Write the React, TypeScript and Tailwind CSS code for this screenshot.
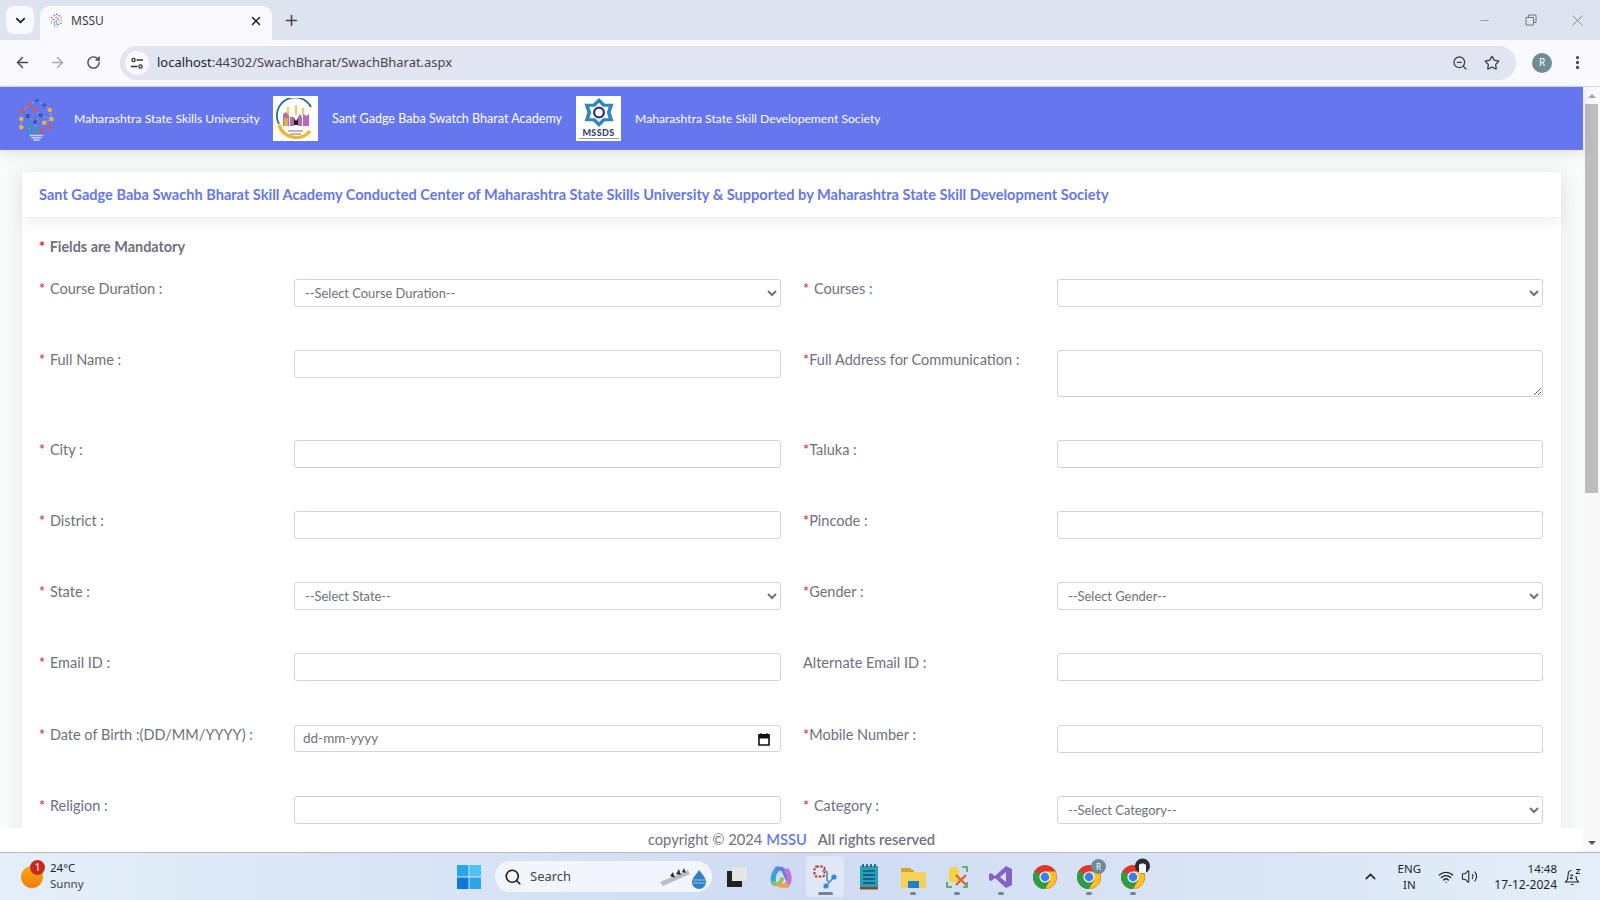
import { ArrowLeft, ArrowRight, ChevronDown, ChevronUp, Minus, MoreVertical, Plus, RotateCw, Search, Star, Volume2, Wifi, X, ZoomOut } from "lucide-react";

const pageFont = { fontFamily: '"Lato", "Noto Sans", sans-serif' };

const MssuLogo = ({ size }: { size: number }) => {
  const dots = [
    [22, 4, "#2f6db5"], [14, 8, "#d9534f"], [30, 9, "#2f6db5"], [6, 15, "#d9534f"], [20, 14, "#d9534f"],
    [36, 14, "#f2b233"], [12, 21, "#2a5fa8"], [26, 20, "#2a5fa8"], [38, 24, "#f2b233"], [5, 24, "#f2b233"],
    [20, 27, "#2a5fa8"], [30, 28, "#f2b233"], [14, 31, "#20a8a0"], [5, 33, "#f2b233"], [22, 35, "#20a8a0"],
    [35, 33, "#d9534f"], [27, 37, "#d9534f"], [15, 38, "#20a8a0"],
  ] as const;
  return (
    <svg width={size} height={size} viewBox="0 0 42 48">
      <path d="M22 4L14 8L6 15M22 4L30 9L36 14L38 24L30 28M20 14L26 20L20 27L22 35M12 21L20 27M5 24V33M26 20L38 24M14 31V38" stroke="#8aa0d8" strokeWidth="1" fill="none" />
      {dots.map(([x, y, c], i) => (
        <circle key={i} cx={x} cy={y} r="2.4" fill={c} />
      ))}
      <path d="M14 42h15M16 44.5h11M18 47h7" stroke="#c9d0e6" strokeWidth="1.6" />
    </svg>
  );
};

const Field = ({ label, star = "* ", right = false, children }: { label: string; star?: string; right?: boolean; children: React.ReactNode }) => (
  <div className={right ? "grid grid-cols-[254px_486px]" : "grid grid-cols-[255px_487px]"}>
    <label className="text-[14.5px] leading-[20px] text-[#6e707e]">
      <span className={star === "* " ? "text-[#e02020] pr-[1px]" : "text-[#e02020]"}>{star}</span>
      {label}
    </label>
    {children}
  </div>
);

const inputCls = "block w-full h-[28px] border border-[#d1d3e2] rounded-[3px] bg-white";
const selectCls = "block w-full h-[28px] border border-[#d1d3e2] rounded-[3px] bg-white pl-[6px] text-[12.9px] text-[#6e707e] outline-none";

const TextInput = () => <input className={inputCls} />;

const SelectBox = ({ text }: { text: string }) => (
  <select className={selectCls}>
    <option>{text}</option>
  </select>
);

const rows: { left: [string, string, React.ReactNode]; right: [string, string, React.ReactNode] }[] = [
  { left: ["Course Duration :", "* ", <SelectBox text="--Select Course Duration--" />], right: ["Courses :", "* ", <SelectBox text="" />] },
  { left: ["Full Name :", "* ", <TextInput />], right: ["Full Address for Communication :", "*", <textarea className="block w-full h-[47px] border border-[#d1d3e2] rounded-[3px] bg-white" />] },
  { left: ["City :", "* ", <TextInput />], right: ["Taluka :", "*", <TextInput />] },
  { left: ["District :", "* ", <TextInput />], right: ["Pincode :", "*", <TextInput />] },
  { left: ["State :", "* ", <SelectBox text="--Select State--" />], right: ["Gender :", "*", <SelectBox text="--Select Gender--" />] },
  { left: ["Email ID :", "* ", <TextInput />], right: ["Alternate Email ID :", "", <TextInput />] },
  {
    left: [
      "Date of Birth :(DD/MM/YYYY) :",
      "* ",
      <div className="flex items-center justify-between h-[27px] border border-[#d1d3e2] rounded-[3px] bg-white pl-[8px] pr-[9px] text-[13.5px] text-[#6e707e]">
        dd-mm-yyyy
        <svg width="14" height="14" viewBox="0 0 14 14">
          <path d="M2 3h10v10H2z" fill="none" stroke="#111" strokeWidth="1.6" />
          <path d="M2 2.5h10V6H2zM4 1v2M10 1v2" fill="#111" stroke="#111" />
        </svg>
      </div>,
    ],
    right: ["Mobile Number :", "*", <TextInput />],
  },
  { left: ["Religion :", "* ", <TextInput />], right: ["Category :", "* ", <SelectBox text="--Select Category--" />] },
];

const TaskIcon = ({ children, dot = false, active = false }: { children: React.ReactNode; dot?: boolean; active?: boolean }) => (
  <div className={active ? "relative w-[38px] h-[41px] mx-[3px] rounded-[4px] bg-white/35 flex items-center justify-center" : "relative w-[44px] h-[41px] flex items-center justify-center"}>
    {children}
    {dot && <span className={active ? "absolute bottom-[2px] left-[12px] w-[15px] h-[3px] rounded-full bg-[#7b8190]" : "absolute bottom-[2px] left-[19px] w-[6px] h-[3px] rounded-full bg-[#7b8190]"} />}
  </div>
);

const ChromeIcon = () => (
  <svg width="24" height="24" viewBox="0 0 24 24">
    <circle cx="12" cy="12" r="12" fill="#e0362c" />
    <path d="M12 12L1.6 6A12 12 0 0 0 12 24l6-12z" fill="#2e9e44" />
    <path d="M12 6.5h10.4A12 12 0 0 1 12 24l5.2-9z" fill="#f9c31c" />
    <circle cx="12" cy="12" r="5.6" fill="#fff" />
    <circle cx="12" cy="12" r="4.4" fill="#3f7de8" />
  </svg>
);

const App = () => {
  return (
    <div className="w-[1600px] h-[900px] flex flex-col overflow-hidden bg-white" style={pageFont}>
      {/* browser tabs */}
      <div className="h-[40px] shrink-0 bg-[#dee3f0] flex items-end pl-[6px] text-[#1f1f1f]" style={{ fontFamily: '"Noto Sans", sans-serif' }}>
        <div className="w-[28px] h-[28px] mb-[6px] rounded-[8px] bg-[#f8f9fe] flex items-center justify-center">
          <ChevronDown size={15} strokeWidth={2.6} />
        </div>
        <div className="ml-[6px] w-[232px] h-[34px] rounded-t-[10px] bg-[#f9f9fe] flex items-center pl-[9px] pr-[9px] pb-[5px]">
          <MssuLogo size={15} />
          <span className="ml-[7px] flex-1 text-[12px] text-[#3c4043]">MSSU</span>
          <X size={14} strokeWidth={2.6} />
        </div>
        <Plus size={17} strokeWidth={2.2} className="ml-[11px] mb-[11px] text-[#444]" />
        <div className="flex-1 flex items-center justify-end self-start h-[40px] text-[#777]">
          <Minus size={13} strokeWidth={1.2} className="mr-[34px]" />
          <svg width="12" height="12" viewBox="0 0 12 12" className="mr-[31px]">
            <path d="M1 3.5h7.5V11H1zM3.5 3.5V1H11v7.5H8.5" fill="none" stroke="#777" strokeWidth="1" />
          </svg>
          <X size={19} strokeWidth={1} className="mr-[13px]" />
        </div>
      </div>
      {/* browser toolbar */}
      <div className="h-[47px] shrink-0 bg-[#f9f9fe] border-b border-[#d5d7de] flex items-center pb-[1px] text-[#474747]" style={{ fontFamily: '"Noto Sans", sans-serif' }}>
        <ArrowLeft size={17} strokeWidth={2} className="ml-[14px]" />
        <ArrowRight size={17} strokeWidth={2} className="ml-[18px] text-[#a8a8ad]" />
        <RotateCw size={15} strokeWidth={2.2} className="ml-[20px]" />
        <div className="ml-[19px] w-[1396px] h-[34px] rounded-full bg-[#e1e4f1] flex items-center pl-[5px] pr-[16px]">
          <div className="w-[24px] h-[24px] rounded-full bg-[#f9f9fe] flex items-center justify-center">
            <svg width="14" height="14" viewBox="0 0 14 14" fill="none" stroke="#333" strokeWidth="1.3">
              <circle cx="3.5" cy="4" r="1.6" />
              <path d="M6.5 4H13M1 10.5h6.5" />
              <circle cx="10.5" cy="10.5" r="1.6" />
            </svg>
          </div>
          <span className="ml-[8px] flex-1 text-[12.95px] text-[#1f1f1f]">
            localhost<span className="text-[#474747]">:44302/SwachBharat/SwachBharat.aspx</span>
          </span>
          <ZoomOut size={16} strokeWidth={2} className="mr-[16px]" />
          <Star size={16} strokeWidth={2} />
        </div>
        <div className="ml-[16px] w-[20px] h-[20px] rounded-full bg-[#6f8b97] text-white text-[10px] flex items-center justify-center">R</div>
        <MoreVertical size={17} strokeWidth={2.6} className="ml-[17px]" />
      </div>

      {/* web page */}
      <div className="flex-1 min-h-0 flex">
        <div className="w-[1583px] flex flex-col min-h-0">
          <header className="h-[63px] shrink-0 bg-[#6576ee] flex items-center text-white text-[12.25px] shadow-[0_4px_12px_rgba(0,0,0,0.1)] relative">
            <div className="w-[45px] h-[45px] ml-[13px] flex items-center justify-center">
              <MssuLogo size={44} />
            </div>
            <span className="ml-[16px] mt-[2px]">Maharashtra State Skills University</span>
            <div className="ml-[13px] w-[45px] h-[45px] bg-white flex items-center justify-center">
              <svg width="42" height="42" viewBox="0 0 42 42">
                <path d="M37 9A18 18 0 0 0 5 26" fill="none" stroke="#1f6f8f" strokeWidth="1.8" />
                <path d="M5 27A18 18 0 0 0 36 33" fill="none" stroke="#f0b62a" strokeWidth="3.4" />
                <path d="M9 28V16l3-2 3 3v11zM16 28V19h4v9zM24 28v-9l2-3 2 3v9zM29 28V15l3 3 3-2v12z" fill="#b86bb0" />
                <path d="M10 28v-8h4v8z" fill="#d7b447" />
                <path d="M20 20l2 3 2-3v7h-4z" fill="#1c1c1c" />
                <path d="M14 9v7M22 7v10M29 10v6" stroke="#e8cf63" strokeWidth="2.4" />
                <path d="M14 33h15M16 36h11" stroke="#777" strokeWidth="1" />
              </svg>
            </div>
            <span className="ml-[14px] mt-[2px] text-[12.55px]">Sant Gadge Baba Swatch Bharat Academy</span>
            <div className="ml-[14px] w-[45px] h-[45px] bg-white flex flex-col items-center overflow-hidden">
              <svg width="38" height="31" viewBox="0 0 38 32" className="mt-[1px]">
                <path d="M19 1l6 6h9l-3 9 3 9h-9l-6 6-6-6H4l3-9-3-9h9z" fill="#2f86bb" />
                <path d="M19 6l4 4h6l-2 6 2 6h-6l-4 4-4-4H9l2-6-2-6h6z" fill="#fff" />
                <circle cx="19" cy="16" r="5" fill="none" stroke="#2b3a78" strokeWidth="2.4" />
              </svg>
              <span className="text-[9px] leading-[9px] font-black tracking-[0.4px] text-[#33466f]">MSSDS</span>
              <span className="mt-[1px] w-[40px] h-[1px] bg-[#9a9a9a]" />
            </div>
            <span className="ml-[14px] mt-[2px] text-[12.15px]">Maharashtra State Skill Developement Society</span>
          </header>

          <div className="flex-1 min-h-0 overflow-hidden bg-[#fafbfb] pt-[22px] px-[22px]">
            <div className="w-[1539px] bg-white shadow-[0_4px_22px_rgba(58,59,69,0.1)]">
              <div className="h-[46px] px-[17px] flex items-center border-b border-[#f2f2f4] shadow-[0_4px_14px_rgba(58,59,69,0.08)] text-[14.57px] font-bold text-[#6576ee]">
                Sant Gadge Baba Swachh Bharat Skill Academy Conducted Center of Maharashtra State Skills University & Supported by Maharashtra State Skill Development Society
              </div>
              <div className="px-[17px] pt-[19px]">
                <p className="text-[14.4px] leading-[20px] font-bold text-[#6e707e] mb-[22px]">
                  <span className="text-[#e02020] pr-[1px]">* </span>Fields are Mandatory
                </p>
                <div className="flex flex-col">
                  {rows.map((r, i) => (
                    <div key={i} className={i === 6 ? "grid grid-cols-[742px_740px] gap-x-[22px] pt-[1px] pb-[43px]" : "grid grid-cols-[742px_740px] gap-x-[22px] pb-[43px]"}>
                      <Field label={r.left[0]} star={r.left[1]}>{r.left[2]}</Field>
                      <Field label={r.right[0]} star={r.right[1]} right>{r.right[2]}</Field>
                    </div>
                  ))}
                </div>
              </div>
            </div>
          </div>

          <footer className="h-[24px] shrink-0 bg-white flex items-center justify-center pb-[2px] text-[14.7px] text-[#6e707e]">
            copyright © 2024&nbsp;<span className="font-semibold text-[#6576ee]">MSSU</span>
            <span className="ml-[11px] font-semibold">All rights reserved</span>
          </footer>
        </div>

        {/* page scrollbar */}
        <div className="w-[17px] bg-[#f8f8f8] flex flex-col items-center">
          <span className="mt-[7px] w-0 h-0 border-x-[4px] border-x-transparent border-b-[4px] border-b-[#a3a3a3]" />
          <div className="mt-[6px] w-[13px] h-[389px] bg-[#bdbdbd]" />
          <div className="flex-1" />
          <span className="mb-[7px] w-0 h-0 border-x-[4px] border-x-transparent border-t-[4px] border-t-[#555]" />
        </div>
      </div>

      {/* windows taskbar */}
      <div className="h-[48px] shrink-0 border-t border-[#b4b8c0] bg-gradient-to-r from-[#e4eff9] via-[#cfdbf2] to-[#e3eef8] flex items-center text-[#1f1f1f]" style={{ fontFamily: '"Noto Sans", sans-serif' }}>
        <div className="relative ml-[21px] w-[22px] h-[22px] rounded-full bg-gradient-to-b from-[#f8a818] to-[#f07c10]">
          <span className="absolute -top-[6px] left-[9px] w-[15px] h-[15px] rounded-full bg-[#c42b1c] text-white text-[10px] leading-[15px] text-center">1</span>
        </div>
        <div className="ml-[7px] w-[407px] pb-[2px] text-[11.5px] leading-[16px]">
          <div>24°C</div>
          <div className="text-[#444]">Sunny</div>
        </div>
        <svg width="24" height="24" viewBox="0 0 24 24">
          <path d="M0 0h11.5v11.5H0z" fill="#2aa5e8" />
          <path d="M12.5 0H24v11.5H12.5z" fill="#4cc2f1" />
          <path d="M0 12.5h11.5V24H0z" fill="#0f78d4" />
          <path d="M12.5 12.5H24V24H12.5z" fill="#2aa5e8" />
        </svg>
        <div className="ml-[14px] w-[217px] h-[31px] rounded-full bg-[#f2f6fc] flex items-center pl-[9px] pr-[4px]">
          <Search size={18} strokeWidth={2.2} />
          <span className="ml-[8px] flex-1 text-[13px] text-[#444]">Search</span>
          <svg width="50" height="26" viewBox="0 0 50 26">
            <path d="M2 18L30 6l2 4L5 22z" fill="#bcbcc4" />
            <path d="M12 12l3-4 2 6zM18 10l3-5 2 6zM24 8l2-4 2 5z" fill="#333" />
            <path d="M41 6c4 5 7 8 7 12a7 7 0 0 1-14 0c0-4 4-7 7-12z" fill="#2f7fc4" />
            <path d="M35 16h12M35 19h12" stroke="#9cc4e6" strokeWidth="1" />
          </svg>
        </div>
        <div className="flex items-center ml-[3px]">
          <TaskIcon>
            <svg width="22" height="22" viewBox="0 0 22 22">
              <path d="M1 5h15v16H1z" fill="#222" />
              <path d="M6 1h15v14H6z" fill="#e6e6e6" />
            </svg>
          </TaskIcon>
          <TaskIcon>
            <svg width="24" height="24" viewBox="0 0 24 24" fill="none">
              <path d="M8 4C5 8 3 13 5 18" stroke="#3aa3d9" strokeWidth="5" strokeLinecap="round" />
              <path d="M5 18c3 3 7 0 8-4" stroke="#8ac858" strokeWidth="4" strokeLinecap="round" />
              <path d="M9 4c3-1 6 0 7 4l2 5" stroke="#5a83e0" strokeWidth="4.4" strokeLinecap="round" />
              <path d="M18 6c3 4 3 10 0 14" stroke="#c86fdc" strokeWidth="5" strokeLinecap="round" />
              <path d="M18 20c-3 1-6 1-8 0" stroke="#f0a04b" strokeWidth="4" strokeLinecap="round" />
            </svg>
          </TaskIcon>
          <TaskIcon dot active>
            <svg width="24" height="24" viewBox="0 0 24 24" fill="none">
              <rect x="1.5" y="1.5" width="10" height="10" rx="2" stroke="#b3392a" strokeWidth="2" strokeDasharray="2.4 1.4" />
              <path d="M9 6h3q2 0 2 2v7l2 2" stroke="#8a97a8" strokeWidth="2" />
              <path d="M21 12l-8 9" stroke="#2b8fdd" strokeWidth="1.4" />
              <circle cx="21" cy="12" r="2.6" fill="#2b8fdd" />
              <circle cx="13" cy="21" r="2.6" fill="#2b8fdd" />
            </svg>
          </TaskIcon>
          <TaskIcon>
            <svg width="20" height="26" viewBox="0 0 20 26">
              <path d="M1 2h18v21H1z" fill="#27a0bd" />
              <path d="M1 23h18v2.5H1z" fill="#8a4a1e" />
              <path d="M4 7h12M4 11h12M4 15h12M4 19h12" stroke="#0f5368" strokeWidth="1.4" />
              <path d="M4 0v3M8 0v3M12 0v3M16 0v3" stroke="#12394a" strokeWidth="1.4" />
            </svg>
          </TaskIcon>
          <TaskIcon dot>
            <svg width="25" height="22" viewBox="0 0 25 22">
              <path d="M0 2h9l2 2h2v6H0z" fill="#d9a22b" />
              <path d="M0 6h25v16H0z" fill="#f7d258" />
              <path d="M7 15h11v7H7z" fill="#1c7fcf" />
            </svg>
          </TaskIcon>
          <TaskIcon dot>
            <svg width="24" height="24" viewBox="0 0 24 24" fill="none">
              <path d="M4 5c0-4 10-4 10 0v10c0 3-10 3-10 0z" fill="#f3d34a" />
              <path d="M17 2h5v5M2 17v5h5M22 17v5h-4" stroke="#3ba34a" strokeWidth="1.6" />
              <path d="M11 20l10-10M11 10l10 10" stroke="#d9662b" strokeWidth="2.4" />
            </svg>
          </TaskIcon>
          <TaskIcon dot>
            <svg width="24" height="24" viewBox="0 0 24 24">
              <path d="M17 1l6 3v16l-6 3-11-10-4 3-2-1V9l2-1 4 3zM17 7l-6 5 6 5z" fill="#8661c5" />
            </svg>
          </TaskIcon>
          <TaskIcon><ChromeIcon /></TaskIcon>
          <TaskIcon dot>
            <ChromeIcon />
            <span className="absolute top-[3px] left-[24px] w-[15px] h-[15px] rounded-full bg-[#6f8b97] text-white text-[8px] leading-[15px] text-center">R</span>
          </TaskIcon>
          <TaskIcon dot>
            <ChromeIcon />
            <svg width="15" height="16" viewBox="0 0 15 16" className="absolute top-[2px] left-[24px]">
              <circle cx="7.5" cy="8" r="7.5" fill="#2a2a2a" />
              <path d="M4 7c1-2 6-2 7 0v8H4z" fill="#f4f4f4" />
            </svg>
          </TaskIcon>
        </div>
        <div className="flex-1 flex items-center justify-end text-[#1f1f1f]">
          <ChevronUp size={17} strokeWidth={2} />
          <div className="ml-[9px] w-[42px] text-[11.5px] leading-[16px] text-center">
            <div>ENG</div>
            <div>IN</div>
          </div>
          <Wifi size={16} strokeWidth={2} className="ml-[8px]" />
          <Volume2 size={17} strokeWidth={1.5} className="ml-[7px]" />
          <div className="ml-[16px] text-[12px] leading-[16px] text-right">
            <div className="text-[11.5px]">14:48</div>
            <div>17-12-2024</div>
          </div>
          <svg width="18" height="18" viewBox="0 0 18 18" fill="none" stroke="#222" strokeWidth="1.1" className="ml-[7px] mr-[18px]">
            <path d="M4.5 4L3.5 11.5L1.5 14h13l-2-2.5L12 8M7 16.5h2.5M4.5 4q1-1.5 3-1.5" />
            <path d="M6 7h3L6 10.5h3M12 1.5h4l-4 4h4" strokeWidth="1" />
          </svg>
        </div>
      </div>
    </div>
  );
};

export default App;
